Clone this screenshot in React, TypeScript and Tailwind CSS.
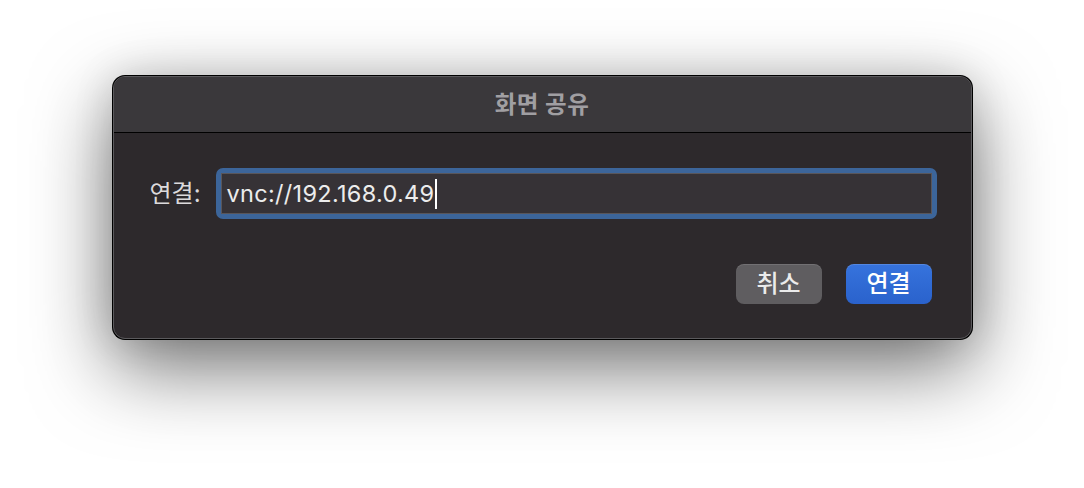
const font = { fontFamily: '"Inter", "Noto Sans CJK KR", sans-serif' };

const App = () => {
  return (
    <div className="w-[1084px] h-[488px] bg-white overflow-hidden pt-[75px]" style={font}>
      <div className="mx-auto w-[861px] rounded-[13px] bg-black p-px shadow-[0_28px_80px_rgba(0,0,0,0.55),0_0_40px_rgba(0,0,0,0.12)]">
        <div className="rounded-[12px] border border-[#5b5a5d] overflow-hidden bg-[#2d292c]">
          {/* title bar */}
          <div className="h-[56px] bg-[#3a383b] border-b border-black flex items-center justify-center">
            <span className="text-[23.5px] font-bold text-[#a09fa2] tracking-[0.5px]">화면 공유</span>
          </div>
          {/* body */}
          <div className="pt-[35px] pb-[34px] pl-[36px] pr-[34px]">
            <div className="flex items-center">
              <label className="text-[24px] text-[#dcdadc] mr-[15px] leading-none">연결:</label>
              <div className="flex-1 h-[51px] rounded-[7px] border-[5px] border-[#3c659a]">
                <div className="h-full border border-[#59565a] bg-[#363236] flex items-center pl-[5px]">
                  <span className="text-[23.5px] text-[#ececec] leading-none tracking-[0.3px]">vnc://192.168.0.49</span>
                  <span className="w-[2px] h-[30px] bg-white ml-[1px]" />
                </div>
              </div>
            </div>
            <div className="flex justify-end gap-[24px] mt-[45px] pr-[5px]">
              <button className="w-[86px] h-[40px] rounded-[8px] bg-[#5f5d60] shadow-[inset_0_1px_0_rgba(255,255,255,0.12)] text-[24px] font-medium text-[#ebebeb]">
                취소
              </button>
              <button className="w-[86px] h-[40px] rounded-[8px] bg-gradient-to-b from-[#3673dd] to-[#2a62cc] shadow-[inset_0_1px_0_rgba(255,255,255,0.15)] text-[24px] font-medium text-white">
                연결
              </button>
            </div>
          </div>
        </div>
      </div>
    </div>
  );
};

export default App;
